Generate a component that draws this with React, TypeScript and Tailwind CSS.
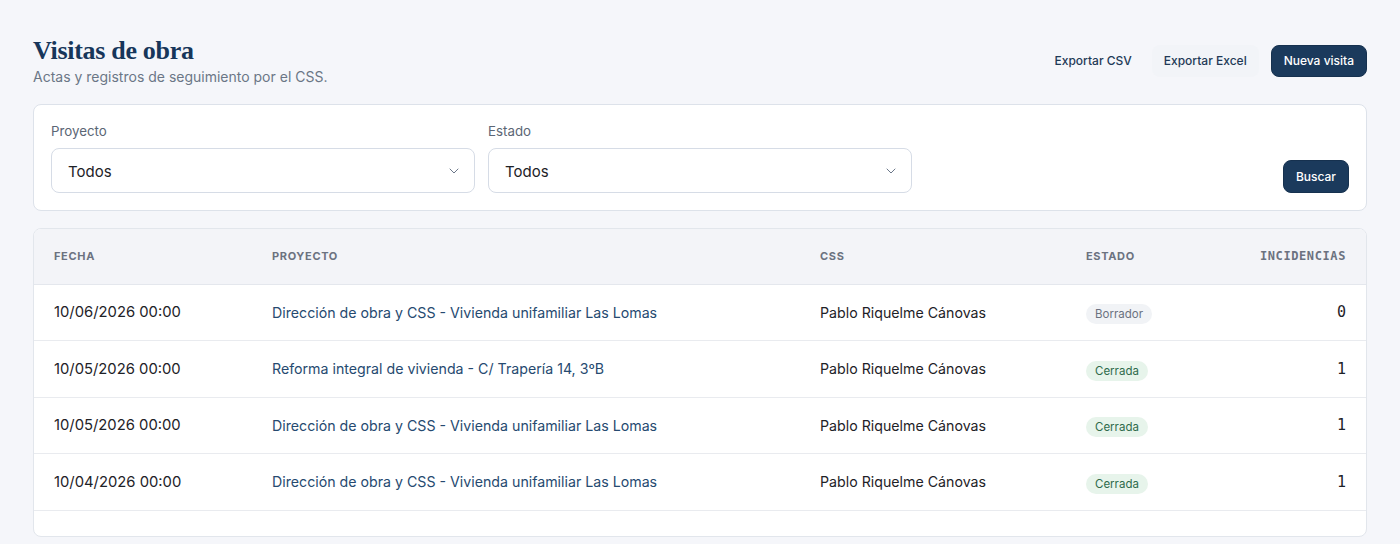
import { ChevronDown } from 'lucide-react';

const VISITAS = [
  { fecha: '10/06/2026 00:00', proyecto: 'Dirección de obra y CSS - Vivienda unifamiliar Las Lomas', css: 'Pablo Riquelme Cánovas', estado: 'Borrador', incidencias: 0 },
  { fecha: '10/05/2026 00:00', proyecto: 'Reforma integral de vivienda - C/ Trapería 14, 3ºB', css: 'Pablo Riquelme Cánovas', estado: 'Cerrada', incidencias: 1 },
  { fecha: '10/05/2026 00:00', proyecto: 'Dirección de obra y CSS - Vivienda unifamiliar Las Lomas', css: 'Pablo Riquelme Cánovas', estado: 'Cerrada', incidencias: 1 },
  { fecha: '10/04/2026 00:00', proyecto: 'Dirección de obra y CSS - Vivienda unifamiliar Las Lomas', css: 'Pablo Riquelme Cánovas', estado: 'Cerrada', incidencias: 1 },
];

const FilterSelect = ({ label }: { label: string }) => (
  <div className="w-[424px]">
    <label className="block text-[13.3px] leading-5 text-[#5b6675] mb-[7px]">{label}</label>
    <div className="h-[45px] bg-white border border-[#d6dce6] rounded-lg flex items-center justify-between pl-4 pr-3">
      <span className="text-[15px] text-[#1e2227] pt-[4px]">Todos</span>
      <ChevronDown size={16} strokeWidth={1.5} className="text-[#6b7789]" />
    </div>
  </div>
);

export default function App() {
  return (
    <div className="min-h-screen bg-[#f5f6fa] px-[33px] pt-[35px] pb-4 font-['Inter',sans-serif]">
      {/* Header */}
      <div className="flex items-center justify-between">
        <div>
          <h1 className="font-['Liberation_Serif',serif] font-bold text-[26px] leading-8 text-[#17365a] tracking-[-0.3px]">
            Visitas de obra
          </h1>
          <p className="text-[14px] leading-5 text-[#6b7686]">Actas y registros de seguimiento por el CSS.</p>
        </div>
        <div className="flex items-center gap-[8px]">
          <button className="h-8 px-[12px] rounded-lg text-[12px] font-medium text-[#1f3a57]">Exportar CSV</button>
          <button className="h-8 px-[12px] rounded-lg text-[12px] font-medium text-[#1f3a57] bg-[#f2f4f8]">Exportar Excel</button>
          <button className="h-8 px-[12px] rounded-lg text-[12px] font-medium text-white bg-[#1b3a5c] border border-[#16314f] ml-[4px]">
            Nueva visita
          </button>
        </div>
      </div>

      {/* Filters */}
      <div className="mt-[17px] bg-white border border-[#dde2ea] rounded-lg pt-[16px] pb-[17px] px-[17px] flex items-end gap-[13px]">
        <FilterSelect label="Proyecto" />
        <FilterSelect label="Estado" />
        <button className="ml-auto h-[33px] px-[12px] rounded-lg text-[12px] font-medium text-white bg-[#1b3a5c] border border-[#16314f]">
          Buscar
        </button>
      </div>

      {/* Table */}
      <div className="mt-[17px] bg-white border border-[#e2e6ec] rounded-lg overflow-hidden">
        <table className="w-full table-fixed">
          <thead className="bg-[#f3f4f8] border-b border-[#e4e7ed]">
            <tr className="h-[55px]">
              <th className="w-[218px] pl-5 text-left text-[11px] font-bold tracking-[0.06em] text-[#6b7280]">FECHA</th>
              <th className="w-[548px] pl-5 text-left text-[11px] font-bold tracking-[0.06em] text-[#6b7280]">PROYECTO</th>
              <th className="w-[266px] pl-5 text-left text-[11px] font-bold tracking-[0.06em] text-[#6b7280]">CSS</th>
              <th className="w-[160px] pl-5 text-left text-[11px] font-bold tracking-[0.06em] text-[#6b7280]">ESTADO</th>
              <th className="pr-5 text-right text-[12px] font-bold tracking-[0.05em] text-[#6b7280] font-['DejaVu_Sans_Mono',monospace]">
                INCIDENCIAS
              </th>
            </tr>
          </thead>
          <tbody>
            {VISITAS.map((v, i) => (
              <tr key={i} className="h-[56.5px] border-b border-[#e9ebef]">
                <td className="pl-5 text-[14.8px] text-[#1e2227]">{v.fecha}</td>
                <td className="pl-5 text-[14.2px] text-[#264a70] truncate">{v.proyecto}</td>
                <td className="pl-5 text-[14.2px] text-[#1e2227]">{v.css}</td>
                <td className="pl-5">
                  <span
                    className={`inline-block px-[9px] py-[2px] rounded-full text-[11.5px] leading-4 ${
                      v.estado === 'Cerrada' ? 'bg-[#e7f4eb] text-[#2f6b4b]' : 'bg-[#f1f3f6] text-[#6b7280]'
                    }`}
                  >
                    {v.estado}
                  </span>
                </td>
                <td className="pr-5 text-right text-[15px] text-[#1e2227] font-['DejaVu_Sans_Mono',monospace]">
                  {v.incidencias}
                </td>
              </tr>
            ))}
          </tbody>
        </table>
        <div className="h-[25px]" />
      </div>
    </div>
  );
}
